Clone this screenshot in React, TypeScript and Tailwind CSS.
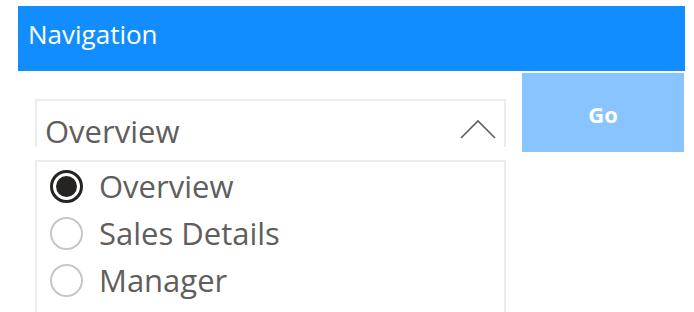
import { useState } from "react";

const PAGES = ["Overview", "Sales Details", "Manager"];

function Radio({ checked }: { checked: boolean }) {
  if (checked) {
    return (
      <span className="flex h-[33px] w-[33px] shrink-0 items-center justify-center rounded-full border-[3px] border-[#252423] bg-white">
        <span className="h-[21px] w-[21px] rounded-full bg-[#252423]" />
      </span>
    );
  }
  return <span className="h-[33px] w-[33px] shrink-0 rounded-full border-2 border-[#c8c6c4] bg-white" />;
}

export default function App() {
  const [page, setPage] = useState("Overview");

  return (
    <div
      className="h-[312px] w-[694px] overflow-hidden bg-white"
      style={{ fontFamily: '"Open Sans", "Noto Sans", sans-serif' }}
    >
      {/* Title bar */}
      <div className="ml-[18px] mt-[6px] h-[65px] w-[667px] bg-[#118dff] pl-[10px] pt-[15px]">
        <span className="text-[26px] leading-none text-white">Navigation</span>
      </div>

      <div className="flex">
        {/* Slicer */}
        <div className="ml-[35px] mt-[28px] w-[471px]">
          <div className="flex h-[48px] items-start justify-between border-x-2 border-t-2 border-[#ececec] pl-[8px] pr-[8px] pt-[15px]">
            <span className="text-[31px] leading-[30px] text-[#605e5c]">{page}</span>
            <svg viewBox="0 0 36 20" className="mt-[3px] h-[20px] w-[36px]" fill="none" stroke="#605e5c" strokeWidth="1.6">
              <path d="M1 19L18 2l17 17" />
            </svg>
          </div>
          <div className="mt-[13px] h-[200px] border-2 border-[#ececec] pl-[13px] pt-[1px]">
            {PAGES.map((p) => (
              <button
                key={p}
                onClick={() => setPage(p)}
                className="flex h-[47px] items-center gap-[16px] text-left"
              >
                <Radio checked={p === page} />
                <span className="text-[31px] leading-none text-[#605e5c]">{p}</span>
              </button>
            ))}
          </div>
        </div>

        {/* Go button */}
        <button className="ml-[16px] mt-[2px] flex h-[79px] w-[162px] items-center justify-center bg-[#89c4ff] pt-[4px] text-[22px] font-bold text-white">
          Go
        </button>
      </div>
    </div>
  );
}
